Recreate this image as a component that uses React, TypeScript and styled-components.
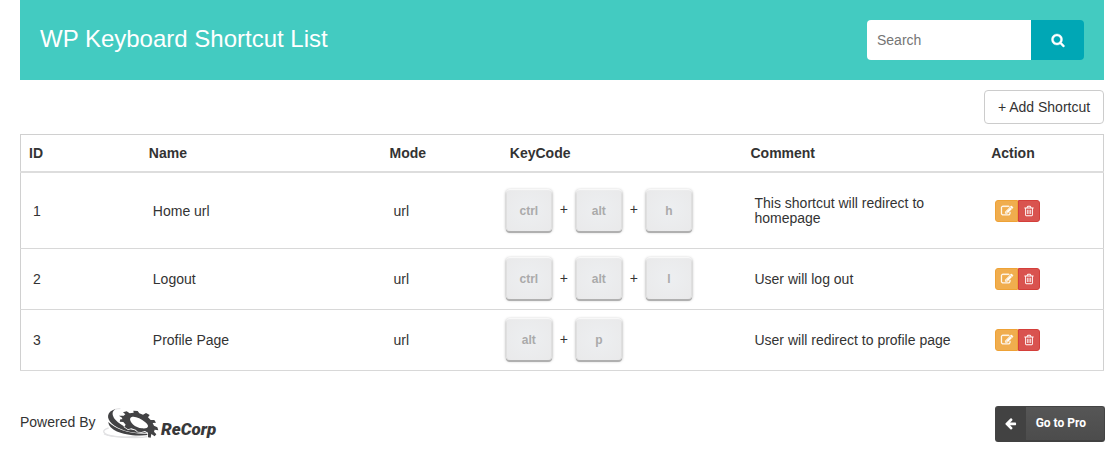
import React from "react";
import styled, { createGlobalStyle } from "styled-components";

const GlobalStyle = createGlobalStyle`
  *, *::before, *::after { box-sizing: border-box; }
  body {
    margin: 0;
    background: #fff;
    color: #333;
    font: 14px/20px "Liberation Sans", Arial, sans-serif;
  }
  button, input { font: inherit; }
  button { cursor: pointer; }
`;

const Page = styled.div`
  padding: 0 16px 0 20px;
`;

const Header = styled.header`
  display: flex;
  align-items: center;
  justify-content: space-between;
  height: 80px;
  padding: 0 20px;
  background: #43cbc1;
`;

const Title = styled.h1`
  margin: 0;
  padding-bottom: 2px;
  color: #fff;
  font-size: 24px;
  font-weight: 400;
  line-height: 26px;
`;

const SearchForm = styled.form`
  display: flex;
  width: 217px;
  height: 40px;
  border-radius: 4px;
  overflow: hidden;
`;

const SearchInput = styled.input`
  flex: 1;
  min-width: 0;
  padding: 0 10px;
  border: 0;
  background: #fff;
  color: #333;
  &::placeholder { color: #757575; opacity: 1; }
`;

const SearchButton = styled.button`
  display: flex;
  align-items: center;
  justify-content: center;
  width: 53px;
  border: 0;
  background: #00a7b5;
  color: #fff;
`;

const Toolbar = styled.div`
  display: flex;
  justify-content: flex-end;
  padding: 10px 0;
`;

const AddButton = styled.button`
  min-width: 120px;
  height: 34px;
  padding: 0 11px;
  border: 1px solid #ccc;
  border-radius: 4px;
  background: #fff;
  color: #333;
`;

const Table = styled.table`
  width: 100%;
  table-layout: fixed;
  border-collapse: collapse;
  border: 1px solid #d0d0d0;
`;

const HeadCell = styled.th<{ $share: number }>`
  width: ${(p) => (p.$share * 100) / 9}%;
  padding: 8px;
  border-bottom: 2px solid #ddd;
  text-align: left;
`;

const Row = styled.tr<{ $tall?: boolean }>`
  height: ${(p) => (p.$tall ? 76 : 61)}px;
`;

const Cell = styled.td`
  padding: 2px 12px 0;
  border-bottom: 1px solid #d8d8d8;
  line-height: 15px;
`;

const KeyCell = styled(Cell)`
  padding: 0 4px 1px;
`;

const ActionCell = styled(Cell)`
  padding-top: 1px;
`;

const Keys = styled.div`
  display: flex;
  align-items: center;
`;

const Key = styled.kbd`
  width: 46px;
  height: 42px;
  border-radius: 4px;
  background: radial-gradient(#edeff1, #e9e9ea);
  box-shadow:
    inset 0 1px 1px #fafafa,
    inset 1px 0 0 #dcdcdc,
    inset -1px 0 0 #dcdcdc,
    0 1px 0 #b0b0b0,
    0 2px 0 #b0b0b0,
    0 1px 3px #999;
  color: #aaa;
  font: bold 12px/44px "Liberation Sans", Arial, sans-serif;
  text-align: center;
`;

const Plus = styled.span`
  width: 24px;
  text-align: center;
`;

const Actions = styled.div`
  display: flex;
`;

const ActionButton = styled.button<{ $danger?: boolean }>`
  display: flex;
  align-items: center;
  justify-content: center;
  width: ${(p) => (p.$danger ? 22 : 23)}px;
  height: 22px;
  padding: 0;
  border: 1px solid ${(p) => (p.$danger ? "#d43f3a" : "#eea236")};
  border-radius: ${(p) => (p.$danger ? "0 3px 3px 0" : "3px 0 0 3px")};
  background: ${(p) => (p.$danger ? "#d9534f" : "#f0ad4e")};
  color: #fff;
`;

const Footer = styled.footer`
  display: flex;
  align-items: center;
  justify-content: space-between;
  padding-top: 34px;
`;

const Powered = styled.div`
  display: flex;
  align-items: center;
  gap: 5px;
`;

const PoweredText = styled.span`
  padding-bottom: 4px;
`;

const Brand = styled.svg`
  display: block;
`;

const ProLink = styled.a`
  display: flex;
  height: 36px;
  border: 1px solid #444;
  border-bottom: 2px solid #414141;
  border-radius: 3px;
  background: linear-gradient(#565656, #4c4c4c);
  color: #fff;
  font: bold 12px/33px Roboto, sans-serif;
  text-decoration: none;
  overflow: hidden;
  margin-right: -1px;
`;

const ProIcon = styled.span`
  display: flex;
  align-items: center;
  justify-content: center;
  width: 30px;
  background: #424242;
`;

const ProLabel = styled.span`
  padding: 0 18px 0 10px;
`;

const paths = {
  search:
    "M1216 832q0-185-131.5-316.5t-316.5-131.5-316.5 131.5-131.5 316.5 131.5 316.5 316.5 131.5 316.5-131.5 131.5-316.5zm512 832q0 52-38 90t-90 38q-54 0-90-38l-343-342q-179 124-399 124-143 0-273.5-55.5t-225-150-150-225-55.5-273.5 55.5-273.5 150-225 225-150 273.5-55.5 273.5 55.5 225 150 150 225 55.5 273.5q0 220-124 399l343 343q37 37 37 90z",
  trash:
    "M704 736v576q0 14-9 23t-23 9h-64q-14 0-23-9t-9-23v-576q0-14 9-23t23-9h64q14 0 23 9t9 23zm256 0v576q0 14-9 23t-23 9h-64q-14 0-23-9t-9-23v-576q0-14 9-23t23-9h64q14 0 23 9t9 23zm256 0v576q0 14-9 23t-23 9h-64q-14 0-23-9t-9-23v-576q0-14 9-23t23-9h64q14 0 23 9t9 23zm128 724v-948h-896v948q0 22 7 40.5t14.5 27 10.5 8.5h832q3 0 10.5-8.5t14.5-27 7-40.5zm-672-1076h448l-48-117q-7-9-17-11h-317q-10 2-17 11zm928 32v64q0 14-9 23t-23 9h-96v948q0 83-47 143.5t-113 60.5h-832q-66 0-113-58.5t-47-141.5v-952h-96q-14 0-23-9t-9-23v-64q0-14 9-23t23-9h309l70-167q15-37 54-63t79-26h320q40 0 79 26t54 63l70 167h309q14 0 23 9t9 23z",
  edit:
    "M888 1184l116-116-152-152-116 116v56h96v96h56zm440-720q-16-16-33 1l-350 350q-17 17-1 33t33-1l350-350q17-17 1-33zm80 594v190q0 119-84.5 203.5t-203.5 84.5h-832q-119 0-203.5-84.5t-84.5-203.5v-832q0-119 84.5-203.5t203.5-84.5h832q63 0 117 25 15 7 18 23 3 17-9 29l-49 49q-14 14-32 8-23-6-45-6h-832q-66 0-113 47t-47 113v832q0 66 47 113t113 47h832q66 0 113-47t47-113v-126q0-13 9-22l64-64q15-15 35-7t20 29zm-96-738l288 288-672 672h-288v-288zm444 132l-92 92-288-288 92-92q28-28 68-28t68 28l152 152q28 28 28 68t-28 68z",
  back:
    "M1664 896v128q0 53-32.5 90.5t-84.5 37.5h-704l293 294q38 36 38 90t-38 90l-75 76q-37 37-90 37-52 0-91-37l-651-652q-37-37-37-90 0-52 37-91l651-650q38-38 91-38 52 0 90 38l75 74q38 38 38 91t-38 91l-293 293h704q52 0 84.5 37.5t32.5 90.5z",
};

const Glyph = styled.svg<{ $heavy?: boolean }>`
  flex: none;
  overflow: visible;
  fill: currentColor;
  stroke: currentColor;
  stroke-width: ${(p) => (p.$heavy ? 50 : 0)};
`;

function Icon({ name, size, heavy }: { name: keyof typeof paths; size: number; heavy?: boolean }) {
  return (
    <Glyph $heavy={heavy} width={size} height={size} viewBox="0 0 1792 1792" aria-hidden="true">
      <path d={paths[name]} />
    </Glyph>
  );
}

function Logo() {
  return (
    <Brand width="120" height="38" viewBox="300 45 360 114" role="img" aria-label="ReCorp">
      <g fill="none" stroke="#e2e2e4" strokeWidth="4">
        <path d="M326 114C302 120 306 134 345 139C380 143 420 145 446 139" />
        <path d="M312 132C335 142 390 146 440 134" />
        <path d="M361 56C338 55 332 68 340 82" strokeWidth="3" />
      </g>
      <path
        fill="#424244"
        d="M346 57C321 65 317 84 336 101C360 122 408 134 446 126C410 127 374 114 353 96C335 80 333 66 346 57Z"
      />
      <path fill="#424244" d="M325 96C326 121 375 142 443 135L446 131C390 134 345 117 325 96Z" />
      <path
        fill="#424244"
        stroke="#fff"
        strokeWidth="4"
        strokeLinejoin="round"
        paintOrder="stroke"
        fillRule="evenodd"
        d="M357 77L371 77L376 73L369 67L380 64L389 70L401 68L400 62L413 63L418 70L429 74L438 69L449 75L444 82L452 90L463 90L468 98L458 99L462 107L472 112L475 121L464 119L462 125L469 133L464 139L454 132L452 143L444 142L444 128L435 123L424 126L413 125L407 119L394 115L384 118L373 110L377 104L370 96L359 95L361 88L367 88L366 83ZM391 84C386 95 406 114 426 115C446 117 450 108 435 96C421 84 398 75 391 84Z"
      />
      <text
        x="483"
        y="135"
        fill="#38383a"
        fontFamily="Roboto, sans-serif"
        fontSize="51"
        fontWeight="900"
        fontStyle="italic"
      >
        ReCorp
      </text>
    </Brand>
  );
}

const columns = [
  { label: "ID", share: 1 },
  { label: "Name", share: 2 },
  { label: "Mode", share: 1 },
  { label: "KeyCode", share: 2 },
  { label: "Comment", share: 2 },
  { label: "Action", share: 1 },
];

const shortcuts = [
  { id: 1, name: "Home url", mode: "url", keys: ["ctrl", "alt", "h"], comment: "This shortcut will redirect to homepage", tall: true },
  { id: 2, name: "Logout", mode: "url", keys: ["ctrl", "alt", "l"], comment: "User will log out" },
  { id: 3, name: "Profile Page", mode: "url", keys: ["alt", "p"], comment: "User will redirect to profile page" },
];

export default function App() {
  return (
    <Page>
      <GlobalStyle />
      <Header>
        <Title>WP Keyboard Shortcut List</Title>
        <SearchForm role="search" onSubmit={(e) => e.preventDefault()}>
          <SearchInput type="text" placeholder="Search" aria-label="Search" />
          <SearchButton type="submit" aria-label="Search">
            <Icon name="search" size={14} heavy />
          </SearchButton>
        </SearchForm>
      </Header>
      <Toolbar>
        <AddButton type="button">+ Add Shortcut</AddButton>
      </Toolbar>
      <Table>
        <thead>
          <tr>
            {columns.map((c) => (
              <HeadCell key={c.label} scope="col" $share={c.share}>{c.label}</HeadCell>
            ))}
          </tr>
        </thead>
        <tbody>
          {shortcuts.map((s) => (
            <Row key={s.id} $tall={s.tall}>
              <Cell>{s.id}</Cell>
              <Cell>{s.name}</Cell>
              <Cell>{s.mode}</Cell>
              <KeyCell>
                <Keys>
                  {s.keys.map((k, i) => (
                    <React.Fragment key={k}>
                      {i > 0 && <Plus>+</Plus>}
                      <Key>{k}</Key>
                    </React.Fragment>
                  ))}
                </Keys>
              </KeyCell>
              <Cell>{s.comment}</Cell>
              <ActionCell>
                <Actions>
                  <ActionButton type="button" aria-label={`Edit ${s.name}`}>
                    <Icon name="edit" size={12} heavy />
                  </ActionButton>
                  <ActionButton type="button" $danger aria-label={`Delete ${s.name}`}>
                    <Icon name="trash" size={12} />
                  </ActionButton>
                </Actions>
              </ActionCell>
            </Row>
          ))}
        </tbody>
      </Table>
      <Footer>
        <Powered>
          <PoweredText>Powered By</PoweredText>
          <Logo />
        </Powered>
        <ProLink href="#pro">
          <ProIcon>
            <Icon name="back" size={13} />
          </ProIcon>
          <ProLabel>Go to Pro</ProLabel>
        </ProLink>
      </Footer>
    </Page>
  );
}
